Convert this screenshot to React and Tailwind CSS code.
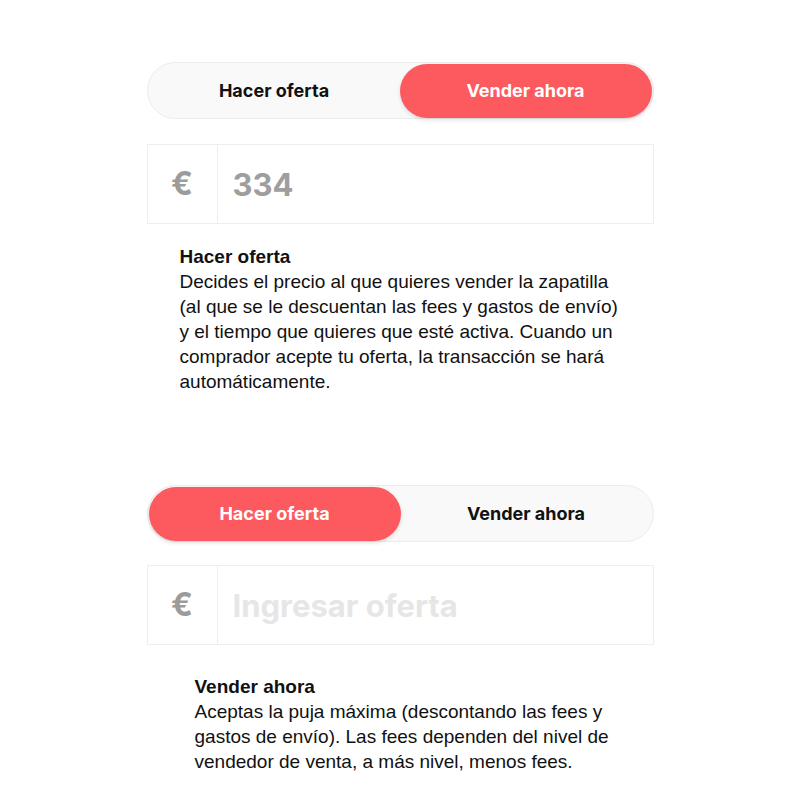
import React from 'react';

const Toggle = ({ active }) => {
  const pill = 'w-[252px] h-[54px] rounded-full bg-[#fd5a5f] text-white shadow-[0_2px_4px_rgba(0,0,0,0.12)]';
  const idle = 'flex-1 h-[54px] text-[#111]';
  return (
    <div className="flex h-[57px] items-center rounded-full border border-[#ececec] bg-[#f9f9f9] px-px font-['Inter',sans-serif] text-[18px] font-bold">
      <div className={`flex items-center justify-center ${active === 'offer' ? pill : idle}`}>Hacer oferta</div>
      <div className={`flex items-center justify-center ${active === 'sell' ? pill : idle}`}>Vender ahora</div>
    </div>
  );
};

const PriceInput = ({ value, placeholder }) => (
  <div className="flex h-[80px] border border-[#eeeeee] bg-white font-['Inter',sans-serif] font-bold">
    <div className="flex w-[70px] items-center justify-center border-r border-[#eeeeee] text-[32px] text-[#9b9b9b]">€</div>
    <div className={`flex items-center pl-[15px] pt-[3px] text-[31px] ${value ? 'text-[#9e9e9e]' : 'text-[#e6e6e6]'}`}>
      {value || placeholder}
    </div>
  </div>
);

export default function App() {
  return (
    <div className="min-h-[800px] w-full bg-white font-['Liberation_Sans',Arial,sans-serif]">
      <div className="mx-auto w-[507px] pt-[62px]">
        <Toggle active="sell" />
        <div className="mt-[25px]">
          <PriceInput value="334" />
        </div>
        <div className="mt-[20px] pl-[33px] pr-[27px] text-[19px] leading-[25px] text-[#111]">
          <p className="font-bold">Hacer oferta</p>
          <p>
            Decides el precio al que quieres vender la zapatilla (al que se le descuentan las fees y gastos de envío) y el tiempo que quieres que esté activa. Cuando un comprador acepte tu oferta, la transacción se hará automáticamente.
          </p>
        </div>

        <div className="mt-[91px]">
          <Toggle active="offer" />
        </div>
        <div className="mt-[23px]">
          <PriceInput placeholder="Ingresar oferta" />
        </div>
        <div className="mt-[29px] pl-[48px] pr-[27px] text-[19px] leading-[25px] text-[#111]">
          <p className="font-bold">Vender ahora</p>
          <p>
            Aceptas la puja máxima (descontando las fees y gastos de envío). Las fees dependen del nivel de vendedor de venta, a más nivel, menos fees.
          </p>
        </div>
      </div>
    </div>
  );
}
